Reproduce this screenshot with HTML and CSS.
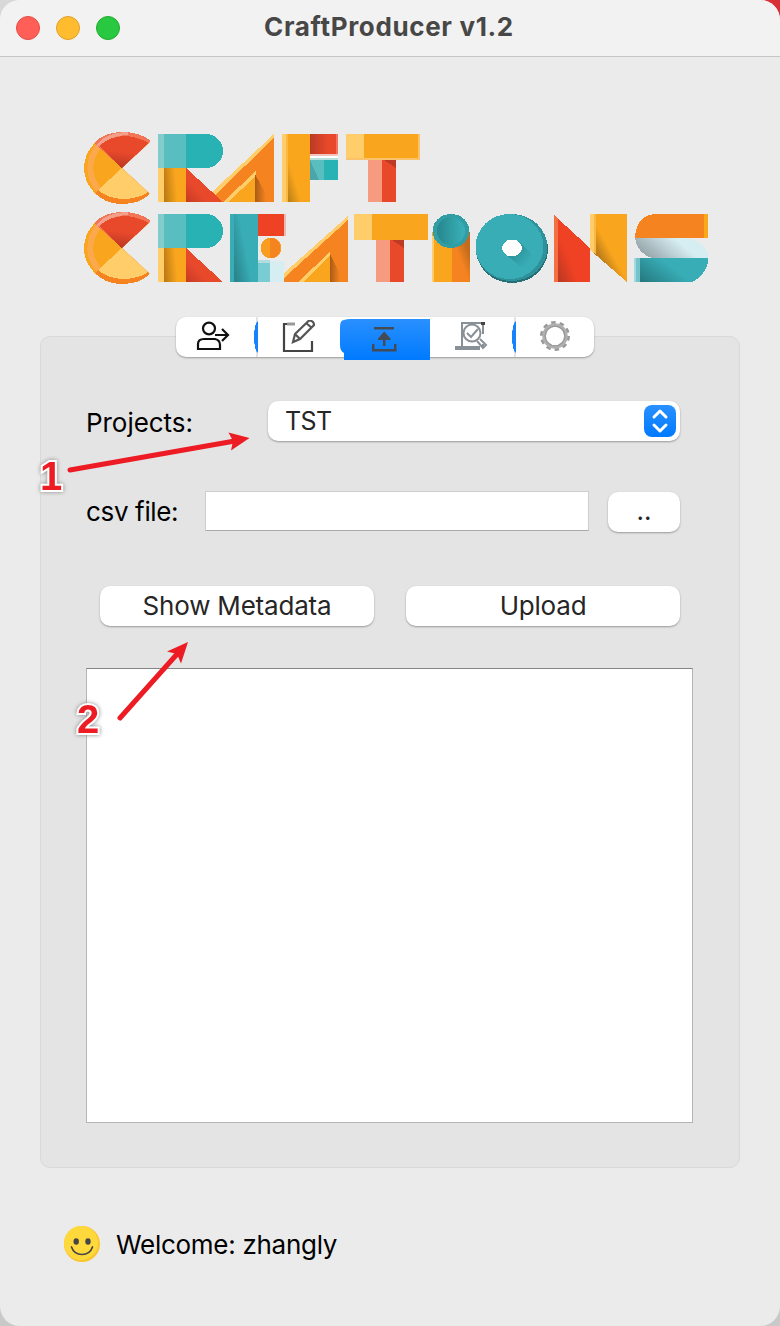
FILE: index.html
```
<!DOCTYPE html>
<html lang="en">
<head>
<meta charset="utf-8">
<title>CraftProducer v1.2</title>
<link rel="stylesheet" href="styles.css">
</head>
<body>
<main class="window">
  <header class="titlebar">
    <div class="lights"><i class="light close"></i><i class="light minimize"></i><i class="light expand"></i></div>
    <h1 class="title"><span>CraftProducer v1.2</span></h1>
  </header>

  <svg class="logo" viewBox="84 132 624 152" role="img" aria-label="Craft Creations" shape-rendering="crispEdges">
    <defs>
      <linearGradient id="redfall" x1=".6" y1="0" x2=".4" y2="1"><stop offset=".5" stop-color="#e9492b"/><stop offset="1" stop-color="#b93825"/></linearGradient>
      <linearGradient id="redcorner" x1="0" y1="1" x2=".6" y2=".5"><stop stop-color="#c43b24"/><stop offset=".6" stop-color="#e9492b"/></linearGradient>
      <linearGradient id="redside"><stop stop-color="#bb3a25"/><stop offset=".65" stop-color="#e9492b"/></linearGradient>
      <linearGradient id="redn" gradientUnits="userSpaceOnUse" x1="558" y1="276" x2="573" y2="270"><stop stop-color="#bd3922"/><stop offset="1" stop-color="#ef4123"/></linearGradient>
      <linearGradient id="goldn" gradientUnits="userSpaceOnUse" x1="597" y1="252" x2="608" y2="246"><stop stop-color="#bd7d18"/><stop offset="1" stop-color="#f9a61e"/></linearGradient>
      <linearGradient id="goldside" x1="0" y1=".6" x2=".8" y2=".5"><stop stop-color="#bd7a13"/><stop offset=".7" stop-color="#f9a61e"/></linearGradient>
      <linearGradient id="goldcorner" gradientUnits="userSpaceOnUse" x1="287" y1="196" x2="300" y2="192"><stop stop-color="#bd8017"/><stop offset=".9" stop-color="#faa61c"/></linearGradient>
      <linearGradient id="tealside"><stop stop-color="#2aa1a3"/><stop offset=".5" stop-color="#29b2b3"/></linearGradient>
      <linearGradient id="teale" gradientUnits="userSpaceOnUse" x1="234" y1="268" x2="249" y2="265"><stop stop-color="#2b858d"/><stop offset="1" stop-color="#38adb6"/></linearGradient>
      <linearGradient id="brown"><stop stop-color="#a95a17"/><stop offset="1" stop-color="#f58420"/></linearGradient>
      <linearGradient id="silver" x1="0" y1=".4" x2=".6" y2=".2"><stop stop-color="#98a7ac"/><stop offset="1" stop-color="#d6edf2"/></linearGradient>
      <linearGradient id="tealcorner" gradientUnits="userSpaceOnUse" x1="642" y1="282" x2="660" y2="258"><stop stop-color="#267980"/><stop offset="1" stop-color="#38adb6"/></linearGradient>
      <linearGradient id="ishadow" x1=".8" y1=".3" x2=".4" y2=".75"><stop stop-color="#c56c1c"/><stop offset=".7" stop-color="#f58420"/></linearGradient>
      <linearGradient id="hole" x1="0" x2="1"><stop offset=".1" stop-color="#288b91"/><stop offset=".9" stop-color="#38adb6"/></linearGradient>
      <linearGradient id="oshadow" x1=".3" y1=".3" x2=".8" y2=".7"><stop stop-color="#2d939a"/><stop offset="1" stop-color="#38adb6"/></linearGradient>
      <clipPath id="cclip"><path d="M122 168L150 142V128H80V208H150V194Z"/></clipPath>
      <g id="letterC" clip-path="url(#cclip)">
        <ellipse cx="122" cy="168" rx="38" ry="36" fill="#f9a61e"/>
        <path d="M97 144A38 36 0 0 0 97 192L101 188A33 31 0 0 1 101 148Z" fill="#fba94c"/>
        <path d="M122 168L94 143Q105 132 122 132Q141 132 152 142Z" fill="#f17556"/>
        <path d="M92 149L97 144Q108 132 128 132V135Q112 135 99 146Z" fill="#f3a08a"/>
        <path d="M122 168L99 146Q110 136 126 136Q138 137 149 143Z" fill="url(#redfall)"/>
        <path d="M122 168L95 193Q105 204 122 204Q140 204 151 193Z" fill="#f58420"/>
        <path d="M122 168L98 190Q108 199 126 199Q140 198 148 192Z" fill="#ffcd69"/>
      </g>
      <g id="letterR">
        <path d="M158 134H206A17 17 0 0 1 206 168H158Z" fill="url(#tealside)"/>
        <path d="M164 134H186V168H164Z" fill="#58bec0"/><path d="M158 134H164V168H158Z" fill="#82cdcc"/>
        <path d="M158 168H164V202H158Z" fill="#ffcd69"/><path d="M164 168H186V202H164Z" fill="url(#goldside)"/>
        <path d="M186 168L223 202H186Z" fill="url(#redcorner)"/>
      </g>
    </defs>
    <use href="#letterC"/><use href="#letterR"/>
    <path d="M274 134V202H222L212 192Z" fill="#f58420"/><path d="M274 134V138L215 195L212 192Z" fill="#ffcd69"/>
    <path d="M255 174V202H225Z" fill="#f9a61e"/><path d="M256 171V176L228 202H223Z" fill="#ffcd69"/><path d="M255 174L266 194V202H255Z" fill="url(#brown)"/>
    <path d="M282 134H286V202H282Z" fill="#ffcd69"/><path d="M286 134H288V202H286Z" fill="#fdb745"/><path d="M288 134H310V202H288Z" fill="url(#goldcorner)"/>
    <path d="M310 134H338V154H310Z" fill="url(#redside)"/><path d="M336 134H338V154H336Z" fill="#f17556"/><path d="M310 154H338V156H310Z" fill="#f1c4bd"/><path d="M310 156H338V158H310Z" fill="#fff"/><path d="M310 158H338V160H310Z" fill="#b9dfdf"/>
    <path d="M310 160H324V180H310Z" fill="#58bec0"/><path d="M310 160L319 180H310Z" fill="#4ca5aa"/><path d="M324 160H338V180H324Z" fill="#29b2b3"/>
    <path d="M346 134H364V160H346Z" fill="#ffcd69"/><path d="M364 134H420V160H364Z" fill="#f9a61e"/><path d="M418 134H420V160H418ZM346 158H420V160H346Z" fill="#fac36b"/>
    <path d="M368 160H382V202H368Z" fill="#f69b80"/><path d="M382 160H396V202H382Z" fill="#e9492b"/><path d="M384 160H396V168Z" fill="#bd3a25"/>
    <g transform="translate(0 80)"><use href="#letterC"/><use href="#letterR"/></g>
    <path d="M230 214H258V282H230Z" fill="url(#teale)"/><path d="M230 214H234V282H230Z" fill="#38adb6"/><path d="M258 214H284V236H258Z" fill="#ef4123"/><path d="M284 214H286V236H284Z" fill="#eabbb2"/>
    <circle cx="271" cy="248" r="10.5" fill="#f99d1e"/><path d="M270 237.500A10.500 10.500 0 0 1 270 258.500Z" fill="#f58420"/>
    <path d="M258 262H270V282H258Z" fill="#79cdd2"/><path d="M258 260H270V263H258Z" fill="#b3dce0"/><path d="M270 261H284V282H270Z" fill="#d6edf1"/>
    <path d="M348 216V282H284V273Z" fill="#f58420"/><path d="M348 216V220L284 278V273Z" fill="#ffcd69"/>
    <path d="M330 254V282H299Z" fill="#f9a61e"/><path d="M330 252V256L303 282H298Z" fill="#ffcd69"/><path d="M330 254L340 274V282H330Z" fill="url(#brown)"/>
    <path d="M354 214H372V240H354Z" fill="#ffcd69"/><path d="M372 214H428V240H372Z" fill="#f9a61e"/>
    <path d="M376 240H390V282H376Z" fill="#f69b80"/><path d="M390 240H404V282H390Z" fill="#e9492b"/><path d="M392 240H404V248Z" fill="#bd3a25"/>
    <path d="M432 232H452V282H432Z" fill="#f9a61e"/><path d="M432 236H434V282H432Z" fill="#ffcd69"/><path d="M452 232H470V282H452Z" fill="url(#ishadow)"/>
    <ellipse cx="451" cy="231" rx="18.500" ry="17" fill="#319ea5"/><circle cx="451" cy="231" r="14" fill="url(#hole)"/>
    <ellipse cx="512" cy="249" rx="36" ry="34" fill="#256f77"/><ellipse cx="511.500" cy="247.500" rx="36" ry="33.500" fill="#2f929a"/><ellipse cx="509.500" cy="246.500" rx="34" ry="32.500" fill="#38adb6"/>
    <path d="M519 242L536 258L524 269L506 255Z" fill="url(#oshadow)"/><ellipse cx="512" cy="248" rx="10" ry="8.500" fill="#fff"/>
    <path d="M554 215L590 248V282H554Z" fill="url(#redn)"/><path d="M554 215L558 219V282H554Z" fill="#f37043"/>
    <path d="M590 214H627V282L590 250Z" fill="url(#goldn)"/><path d="M590 214H594V253L590 250Z" fill="#ffcd69"/><path d="M594 214H596V255L594 253Z" fill="#fdb745"/>
    <path d="M635 238Q636 214 657 214H708V238Z" fill="#f58420"/><path d="M704 214H708V238H704Z" fill="#faa81b"/>
    <path d="M635 238H683Q705 240 708 255V258H652Q637 253 635 238Z" fill="url(#silver)"/>
    <path d="M640 258H708V263Q704 277 692 282H640Z" fill="url(#tealcorner)"/><path d="M634 258H636V282H634Z" fill="#a4dadd"/><path d="M636 258H640V282H636Z" fill="#72c4ca"/>
  </svg>

  <section class="panel">
    <nav class="tabs">
      <button class="tab user"><svg viewBox="195 320 34 34"><g fill="none" stroke="#111" stroke-width="2.200"><ellipse cx="208" cy="328.500" rx="6" ry="5.800"/><path d="M197 349V344Q197 339 203 339H214Q219 340 219 345V349ZM214 335H227M221 329L227 335L221 341"/></g></svg></button>
      <button class="tab edit"><svg viewBox="281 320 34 34"><path d="M294 324H283V351H311V341" fill="none" stroke="#444" stroke-width="2.200"/><path d="M286 324H294" stroke="#999" stroke-width="3"/><path d="M292 342L294 334L308 320.500Q313 321 313 325L299 339ZM294 334L299 339M305 323L311 328" fill="none" stroke="#555" stroke-width="2.200"/></svg></button>
      <button class="tab upload"><svg viewBox="367 320 34 34"><g fill="#454b55"><path d="M374 324H394V326.500H374ZM383 334H385.500V343H383ZM378 335.500L384.200 328.500L390.500 335.500V337H378Z"/><path d="M372 341H374.500V346H394V341H396.500V348.500H372Z"/></g></svg></button>
      <button class="tab review"><svg viewBox="453 320 34 34"><g fill="none" stroke="#899096" stroke-width="2"><path d="M461 346V323H484M482 325V334M482 344V347"/><circle cx="471" cy="333" r="8.500"/><path d="M466 333L470 337L477 329M476 341L482 348L485 345L479 339"/><path d="M454 348H479" stroke-width="4"/></g><path d="M480 322H484V325H480Z" fill="#444"/></svg></button>
      <button class="tab settings"><svg viewBox="539 320 34 34"><g fill="none" stroke="#999"><circle cx="556" cy="336" r="13.500" stroke-width="3" stroke-dasharray="4.480 4"/><circle cx="556" cy="336" r="11" stroke-width="3.500" stroke="#b0b0b0"/><circle cx="556" cy="336" r="9.800" stroke-width="1.300"/></g></svg></button>
    </nav>
    <div class="project-row">
      <label class="label projects"><span>Projects:</span></label>
      <button class="select"><span class="project">TST</span><svg class="stepper" viewBox="0 0 32 32"><path d="M10 12L16 6L22 12M10 20L16 26L22 20" fill="none" stroke="#fff" stroke-width="3" stroke-linecap="round" stroke-linejoin="round"/></svg></button>
    </div>
    <div class="file-row">
      <label class="label csv" for="csv"><span>csv file:</span></label><input id="csv" class="file">
      <button class="push browse">..</button>
    </div>
    <div class="actions"><button class="push"><span class="show">Show Metadata</span></button><button class="push"><span class="upload-text">Upload</span></button></div>
    <div class="output"></div>
  </section>

  <footer class="footer">
    <svg class="smile" viewBox="0 0 36 36"><circle cx="18" cy="18" r="18" fill="#f8c72f"/><ellipse cx="17" cy="17" rx="17" ry="17" fill="#ffd83b"/><ellipse cx="12.200" cy="15.500" rx="2.700" ry="3.300" fill="#454545"/><ellipse cx="24" cy="15.500" rx="2.700" ry="3.300" fill="#454545"/><path d="M7.500 21C11 31 25 31 28.500 21" fill="none" stroke="#454545" stroke-width="1.700" stroke-linecap="round"/></svg>
    <span class="welcome">Welcome: zhangly</span>
  </footer>

  <svg class="arrows" viewBox="0 0 780 1326"><g fill="#ed1c24" stroke="#ed1c24"><path d="M70 470L232 441.500M120 718L178 653" stroke-width="5" stroke-linecap="round"/><path stroke="none" d="M249.500 438L228.500 432.500L233 441L231 450.500ZM188 642L167 651.500L177 654L181 663.500Z"/></g></svg>
  <b class="mark one">1</b><b class="mark two">2</b>
</main>
</body>
</html>
```
FILE: styles.css
```
* { box-sizing: border-box; }
html { background: linear-gradient(90deg, #d8d8d8 97%, #d92f36 97%) top / 100% 40px no-repeat, #c9c9c9; }
body { margin: 0; font-family: Inter, "Liberation Sans", sans-serif; font-size: 26px; color: #000; }
button, input { font: inherit; color: #262626; padding: 0; border: 0; margin: 0; }
.window { position: relative; width: 780px; height: 1326px; background: #ebebeb; border-radius: 20px; overflow: hidden; }
.titlebar { height: 57px; display: flex; align-items: center; background: #f3f2f2; border-bottom: 1px solid #c5c5c5; }
.lights { display: flex; gap: 16px; width: 264px; padding-left: 16px; }
.light { width: 24px; height: 24px; border-radius: 50%; border: 1px solid; }
.close { background: #ff5f57; border-color: #e24b44; }
.minimize { background: #febc2e; border-color: #dea02b; }
.expand { background: #28c840; border-color: #20aa32; }
.title { margin: 0; font-size: 26px; line-height: 54px; font-weight: 700; color: #474747; white-space: nowrap; letter-spacing: .65px; padding-bottom: 3px; }
.logo { display: block; width: 624px; height: 152px; margin: 75px 0 0 84px; }
.panel { width: 700px; height: 832px; margin: 52px 0 0 40px; padding: 0 45px; background: #e4e4e4; border: 1px solid #d9d9d9; border-radius: 10px; }
.tabs { width: 418px; height: 40px; display: flex; margin: -20px 0 0 90px; background: #fff; border-radius: 10px; box-shadow: 0 1px 2px #999; }
.tab { height: 40px; background: none; display: flex; align-items: center; justify-content: center; }
.tab svg { width: 34px; height: 34px; display: block; }
.user { width: 82px; padding-right: 9px; background: radial-gradient(ellipse 4px 16px at 100% 50%, #1683fd 95%, transparent 100%), linear-gradient(#e3e3e3, #e3e3e3) right / 2px 100% no-repeat; }
.edit { width: 82px; }
.upload { width: 90px; height: 41px; margin-top: 2px; padding-right: 2px; background: linear-gradient(#2990ff, #007aff); clip-path: path("M0 8Q0 1 4 1Q7 0 10 0H90V41H4V34Q0 32 0 26Z"); }
.review { width: 86px; padding-right: 5px; background: radial-gradient(ellipse 4px 16px at 100% 50%, #1683fd 95%, transparent 100%), linear-gradient(#e3e3e3, #e3e3e3) right / 2px 100% no-repeat; }
.settings { width: 78px; }
.project-row { height: 40px; display: flex; margin-top: 44px; }
.label { width: 182px; line-height: 44px; letter-spacing: -.05px; white-space: nowrap; }
.select { width: 412px; display: flex; align-items: center; justify-content: space-between; padding: 0 4px 0 17px; background: #fff; border-radius: 10px; box-shadow: 0 1px 2px #999; }
.project { font-size: 25px; letter-spacing: -.6px; }
.stepper { width: 32px; height: 32px; border-radius: 8px; background: linear-gradient(#2990ff, #007aff); }
.file-row { display: flex; height: 41px; margin-top: 50px; }
.csv { width: 119px; line-height: 42px; letter-spacing: -.35px; }
.file { width: 384px; height: 40px; background: #fff; border: 1px solid #cecece; border-bottom-color: #aaa; }
.push { display: flex; align-items: center; justify-content: center; background: #fff; border-radius: 10px; box-shadow: 0 1px 2px #999; white-space: nowrap; }
.browse { width: 72px; height: 40px; margin: 1px 0 0 19px; padding-bottom: 4px; }
.actions { display: flex; height: 40px; gap: 32px; margin: 54px 0 0 14px; }
.actions .push { width: 274px; padding-bottom: 2px; letter-spacing: -.2px; }
.output { width: 607px; height: 455px; margin-top: 42px; background: #fff; border: 1px solid #b5b5b5; border-top-color: #858585; }
.footer { display: flex; align-items: center; gap: 16px; margin: 58px 0 0 64px; letter-spacing: -.28px; }
.smile { width: 36px; height: 36px; }
.arrows { position: absolute; inset: 0; width: 780px; height: 1326px; pointer-events: none; }
.mark { position: absolute; font: bold 40px/40px "Liberation Sans", sans-serif; color: #ed1c24; -webkit-text-stroke: 4px #fff; paint-order: stroke fill; filter: drop-shadow(0 0 2px #888); }
.one { left: 40px; top: 456px; }
.two { left: 77px; top: 699px; }
```
